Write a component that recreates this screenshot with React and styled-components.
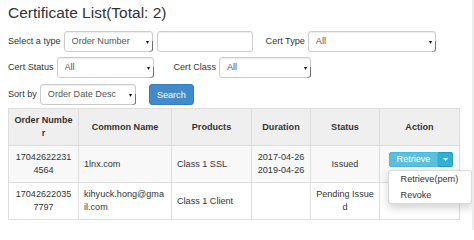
import React from "react";
import styled, { createGlobalStyle } from "styled-components";

const Global = createGlobalStyle`
  html, body { margin: 0; padding: 0; background: #fff; }
  body {
    font-family: "Liberation Sans", Helvetica, Arial, sans-serif;
    font-size: 9.1px;
    line-height: 13px;
    color: #333;
  }
  * { box-sizing: border-box; }
`;

const Page = styled.div`
  width: 474px;
  height: 230px;
  padding: 4px 0 0 8px;
  border-right: 2px solid #ececec;
  overflow: hidden;
`;

const Title = styled.h3`
  margin: 0 0 10px;
  font-size: 15.5px;
  line-height: 17px;
  font-weight: 400;
  color: #333;
`;

const FormRow = styled.div`
  display: flex;
  align-items: center;
  height: 21px;
  margin-bottom: ${(p) => p.$mb ?? 5}px;
`;

const Label = styled.span`
  white-space: nowrap;
  margin-left: ${(p) => p.$ml ?? 0}px;
  margin-right: 3px;
  color: #333;
`;

const SelectBox = styled.div`
  position: relative;
  display: flex;
  align-items: center;
  width: ${(p) => p.$w}px;
  height: 21px;
  padding-left: 7px;
  border: 1px solid #ccc;
  border-radius: 3px;
  background: #fff;
  color: #555;
  box-shadow: inset 0 1px 1px rgba(0, 0, 0, 0.075);
  &::after {
    content: "";
    position: absolute;
    right: -1px;
    bottom: -1px;
    width: 3px;
    height: 55%;
    border-right: 1px solid #6f6f6f;
    border-bottom: 1px solid #9a9a9a;
    border-bottom-right-radius: 3px;
  }
`;

const SelectValue = styled.span`
  flex: 1;
  white-space: nowrap;
  overflow: hidden;
`;

const SelectArrow = styled.svg`
  width: 3px;
  height: 4px;
  margin-right: 3px;
  flex: none;
`;

const TextInput = styled.div`
  width: ${(p) => p.$w}px;
  height: 21px;
  margin-left: 4px;
  border: 1px solid #ccc;
  border-radius: 3px;
  background: #fff;
  box-shadow: inset 0 1px 1px rgba(0, 0, 0, 0.075);
`;

const PrimaryButton = styled.button`
  width: 45px;
  height: 21px;
  margin-left: 13px;
  padding: 0;
  border: 1px solid #357ebd;
  border-radius: 3px;
  background: #428bca;
  color: #fff;
  font-family: inherit;
  font-size: 9.1px;
`;

const Table = styled.table`
  width: 451px;
  margin-top: 3px;
  border-collapse: collapse;
  table-layout: fixed;
`;

const Col = styled.col`
  width: ${(p) => p.$w}px;
`;

const HeadCell = styled.th`
  height: 37px;
  padding: 5px;
  border: 1px solid #ddd;
  background: #efefef;
  font-weight: 700;
  text-align: center;
  vertical-align: middle;
  line-height: 13px;
  color: #333;
`;

const BodyRow = styled.tr`
  background: ${(p) => (p.$striped ? "#f8f8f8" : "#fff")};
  height: ${(p) => p.$h}px;
`;

const Cell = styled.td`
  padding: 5px 5px;
  border: 1px solid #ddd;
  text-align: ${(p) => p.$align || "center"};
  vertical-align: middle;
  line-height: 13px;
  color: #333;
`;

const ActionCell = styled.td`
  padding: 5px 5px 0;
  border: 1px solid #ddd;
  text-align: center;
  vertical-align: top;
`;

const BtnGroup = styled.div`
  position: relative;
  display: inline-flex;
  margin-top: 1px;
  margin-left: 3px;
`;

const InfoButton = styled.button`
  height: 15px;
  padding: 0 7px;
  border: 1px solid #46b8da;
  border-radius: 2px 0 0 2px;
  background: #5bc0de;
  color: #fff;
  font-family: inherit;
  font-size: 9.1px;
  line-height: 13px;
`;

const CaretButton = styled.button`
  display: flex;
  align-items: center;
  justify-content: center;
  width: 15px;
  height: 15px;
  padding: 0;
  border: 1px solid #269abc;
  border-left: none;
  border-radius: 0 2px 2px 0;
  background: #31b0d5;
`;

const Caret = styled.svg`
  width: 5px;
  height: 3px;
`;

const Menu = styled.ul`
  position: absolute;
  top: 100%;
  left: -1px;
  margin: 3px 0 0;
  padding: 0;
  list-style: none;
  width: 84px;
  background: #fff;
  border: 1px solid rgba(0, 0, 0, 0.15);
  border-radius: 3px;
  box-shadow: 0 4px 8px rgba(0, 0, 0, 0.175);
  text-align: left;
  z-index: 10;
`;

const MenuItem = styled.li`
  padding: 0 12px;
  line-height: 16px;
  white-space: nowrap;
  color: #333;
`;

function Select({ w, value }) {
  return (
    <SelectBox $w={w}>
      <SelectValue>{value}</SelectValue>
      <SelectArrow viewBox="0 0 3 4">
        <path d="M0 1 L3 1 L1.5 4 Z" fill="#111" />
      </SelectArrow>
    </SelectBox>
  );
}

export default function App() {
  return (
    <>
      <Global />
      <Page>
        <Title>Certificate List(Total: 2)</Title>
        <FormRow>
          <Label>Select a type</Label>
          <Select w={89} value="Order Number" />
          <TextInput $w={96} />
          <Label $ml={13}>Cert Type</Label>
          <Select w={128} value="All" />
        </FormRow>
        <FormRow $mb={6}>
          <Label>Cert Status</Label>
          <Select w={97} value="All" />
          <Label $ml={20}>Cert Class</Label>
          <Select w={92} value="All" />
        </FormRow>
        <FormRow $mb={0}>
          <Label>Sort by</Label>
          <Select w={96} value="Order Date Desc" />
          <PrimaryButton>Search</PrimaryButton>
        </FormRow>
        <Table>
          <colgroup>
            <Col $w={70} />
            <Col $w={93} />
            <Col $w={80} />
            <Col $w={59} />
            <Col $w={69} />
            <Col $w={80} />
          </colgroup>
          <thead>
            <tr>
              <HeadCell>
                Order Numbe
                <br />r
              </HeadCell>
              <HeadCell>Common Name</HeadCell>
              <HeadCell>Products</HeadCell>
              <HeadCell>Duration</HeadCell>
              <HeadCell>Status</HeadCell>
              <HeadCell>Action</HeadCell>
            </tr>
          </thead>
          <tbody>
            <BodyRow $striped $h={37}>
              <Cell>
                17042622231
                <br />
                4564
              </Cell>
              <Cell $align="left">1lnx.com</Cell>
              <Cell $align="left">Class 1 SSL</Cell>
              <Cell>
                2017-04-26
                <br />
                2019-04-26
              </Cell>
              <Cell>Issued</Cell>
              <ActionCell>
                <BtnGroup>
                  <InfoButton>Retrieve</InfoButton>
                  <CaretButton>
                    <Caret viewBox="0 0 5 3">
                      <path d="M0 0 L5 0 L2.5 3 Z" fill="#fff" />
                    </Caret>
                  </CaretButton>
                  <Menu>
                    <MenuItem>Retrieve(pem)</MenuItem>
                    <MenuItem>Revoke</MenuItem>
                  </Menu>
                </BtnGroup>
              </ActionCell>
            </BodyRow>
            <BodyRow $h={36}>
              <Cell>
                17042622035
                <br />
                7797
              </Cell>
              <Cell $align="left">
                kihyuck.hong@gma
                <br />
                il.com
              </Cell>
              <Cell $align="left">Class 1 Client</Cell>
              <Cell />
              <Cell>
                Pending Issue
                <br />d
              </Cell>
              <Cell />
            </BodyRow>
          </tbody>
        </Table>
      </Page>
    </>
  );
}
